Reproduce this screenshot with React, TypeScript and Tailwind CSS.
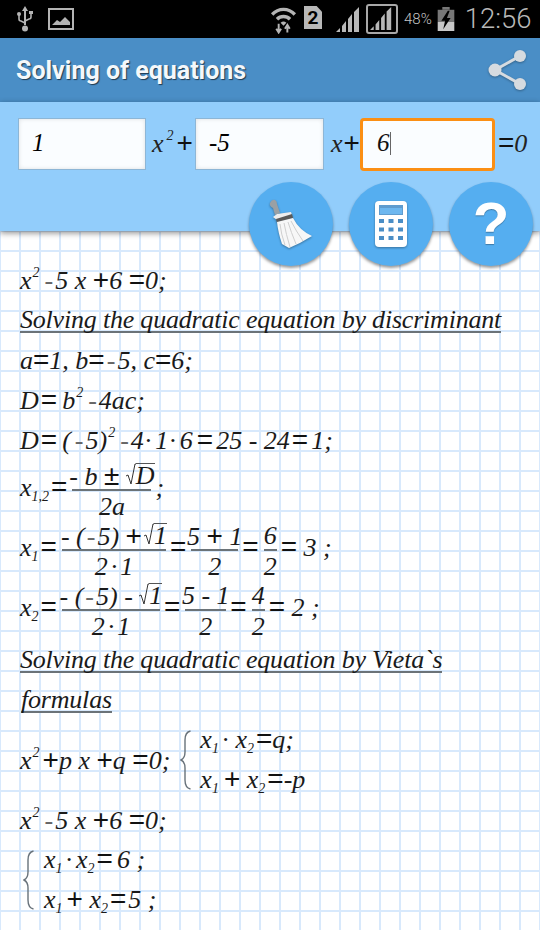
import React from "react";

const Sup = ({ c, cls = "ml-[1px] mr-[3px]" }: { c: string; cls?: string }) => <span className={`text-[14px] align-[12px] leading-none ${cls}`}>{c}</span>;
const Sub = ({ c }: { c: string }) => <span className="text-[14px] align-[-5px] leading-none mr-[2px]">{c}</span>;
const Op = ({ c, cls = "" }: { c: string; cls?: string }) => <span className={`font-['Liberation_Sans',sans-serif] not-italic text-[28px] leading-none text-[#111] ${cls}`}>{c}</span>;
const Mi = () => <span className="text-[#666] mx-[2px]">-</span>;
const Dot = ({ cls = "ml-[1px] mr-[4px]" }: { cls?: string }) => <span className={cls}>·</span>;

const Row = ({ h = "h-10", children }: { h?: string; children: React.ReactNode }) => (
  <div className={`${h} flex items-center whitespace-pre`}><span>{children}</span></div>
);
const FlexRow = ({ h, children }: { h: string; children: React.ReactNode }) => (
  <div className={`${h} flex items-center whitespace-pre`}>{children}</div>
);
const Head = ({ children, cls = "" }: { children: React.ReactNode; cls?: string }) => (
  <div className="h-10 flex items-center whitespace-pre"><span className={`border-b-2 border-[#6b7378] mt-[2px] leading-[22px] tracking-[-0.2px] ${cls}`}>{children}</span></div>
);

const Frac = ({ t, b, w }: { t: React.ReactNode; b: React.ReactNode; w: string }) => (
  <span className={`inline-flex flex-col items-center ${w} ml-[5px] mr-[4px] align-middle`}>
    <span className="h-[27px] leading-[28px] whitespace-pre">{t}</span>
    <span className="h-[2px] w-full bg-[#6b7378]" />
    <span className="h-[27px] leading-[31px] whitespace-pre">{b}</span>
  </span>
);

const Root = ({ c }: { c: string }) => (
  <span className="inline-flex items-end h-[27px]">
    <svg width="10" height="22" viewBox="0 0 10 22" className="mb-[4px] shrink-0"><path d="M0 13 L2 12 L5 21 L9 1 L10 1" fill="none" stroke="#333" strokeWidth="1" /></svg>
    <span className="border-t border-[#555] h-[22px] leading-[24px] mb-[4px]">{c}</span>
  </span>
);

const Brace = () => (
  <svg width="12" height="60" viewBox="0 0 12 60" className="shrink-0 block">
    <path d="M10.5 1 C6 2 5 5 5 10 L5 22 C5 27 3 29 1 30 C3 31 5 33 5 38 L5 50 C5 55 6 58 10.5 59" fill="none" stroke="#68727a" strokeWidth="1.4" />
  </svg>
);

const Circle = ({ children }: { children: React.ReactNode }) => (
  <div className="w-[84px] h-[84px] rounded-full bg-[#55aef0] shadow-[0_2px_3px_rgba(0,0,0,0.4)] flex items-center justify-center">{children}</div>
);

const Field = ({ w, children }: { w: string; children: React.ReactNode }) => (
  <div className={`${w} h-[52px] pl-[13px] pb-[3px] bg-[#fafdff] border border-[#8db6d6] shadow-[inset_0_0_4px_rgba(0,0,0,0.12)] flex items-center shrink-0 text-[25px] text-[#000]`}>{children}</div>
);

const Sig = ({ w = 26, h = 25 }: { w?: number; h?: number }) => (
  <svg width={w} height={h} viewBox="0 0 26 25" className="block">
    <path d="M0 25 L4 25 L4 21 Z M6 25 L6 19 L10 14 L10 25 Z M12 25 L12 12 L16 7 L16 25 Z M18 25 L18 5 L23 0 L23 25 Z" fill="#b8b8b8" />
  </svg>
);

export default function App() {
  return (
    <div className="w-[540px] h-[930px] overflow-hidden flex flex-col font-['Liberation_Serif',serif] bg-white">
      <div className="h-[38px] bg-black shrink-0 flex items-center text-[#b4b4b4]">
        <svg width="18" height="28" viewBox="0 0 18 28" className="ml-[16px]">
          <path d="M9 1 L12 6 L10 6 L10 20 L8 20 L8 6 L6 6 Z" fill="#b4b4b4" />
          <circle cx="9" cy="23.5" r="3" fill="#b4b4b4" />
          <path d="M3 10 V14 Q3 16 5 16 L9 18 M15 8 V12 Q15 14 13 14 L9 16" fill="none" stroke="#b4b4b4" strokeWidth="1.6" />
          <rect x="1" y="7" width="4" height="4" rx="2" fill="#b4b4b4" /><rect x="13" y="6" width="4" height="3" fill="#b4b4b4" />
        </svg>
        <svg width="26" height="22" viewBox="0 0 26 22" className="ml-[14px]">
          <rect x="1" y="1" width="24" height="20" fill="none" stroke="#b4b4b4" strokeWidth="2" />
          <path d="M4 17 L9 12 L12 14 L17 9 L22 14 L22 17 Z" fill="#b4b4b4" />
        </svg>
        <svg width="27" height="30" viewBox="0 0 28 30" className="ml-[196px] mb-[1px]">
          <path d="M1 9 A18 18 0 0 1 27 9 L24.5 11.5 A14 14 0 0 0 3.5 11.5 Z M6 14 A11 11 0 0 1 22 14 L19.5 16.5 A8 8 0 0 0 8.5 16.5 Z M11 19 A4.5 4.5 0 0 1 17 19 L14 22 Z" fill="#b4b4b4" />
          <path d="M9 20 V27 M6.5 25 L9 29 L11.5 25 M18 29 V22 M15.5 25 L18 21 L20.5 25" stroke="#b4b4b4" strokeWidth="2" fill="none" />
        </svg>
        <div className="ml-[7px] w-[18px] h-[23px] mb-[3px] bg-[#b8b8b8] flex items-center justify-center font-['Roboto',sans-serif] font-bold text-[19px] leading-none text-black [clip-path:polygon(0_0,70%_0,100%_25%,100%_100%,0_100%)]">2</div>
        <div className="ml-[14px] flex items-end"><Sig /></div>
        <div className="ml-[4px] w-[32px] h-[30px] border-2 border-[#a8a8a8] rounded-[3px] flex items-end justify-center pb-[2px]"><Sig w={24} h={23} /></div>
        <span className="ml-[6px] font-['Roboto',sans-serif] text-[15px] font-light leading-none text-[#c4c4c4]">48%</span>
        <svg width="18" height="24" viewBox="0 0 18 26" className="ml-[5px]">
          <rect x="5" y="0" width="8" height="3" fill="#777" />
          <rect x="0" y="3" width="18" height="13" fill="#777" />
          <path d="M0 16 H18 V26 H0 Z" fill="#c8c8c8" />
          <path d="M11 4 L4 15 L8 15 L6 24 L14 12 L10 12 L13 4 Z" fill="#000" />
        </svg>
        <span className="ml-[10px] font-['Roboto',sans-serif] font-light text-[27.5px] leading-none text-[#b8b8b8]">12:56</span>
      </div>

      <div className="h-[64px] bg-[#4a8ec6] shrink-0 flex items-center justify-between pl-[16px] pr-[12px]">
        <span className="pt-[2px] font-['Roboto',sans-serif] font-bold text-[25px] text-[#f4f8fb] [text-shadow:1px_1px_1px_rgba(0,0,0,0.6)]">Solving of equations</span>
        <svg width="40" height="40" viewBox="0 0 40 40" className="drop-shadow-[0_1px_1px_rgba(0,0,0,0.3)]">
          <path d="M32 6 L7 20 L32 34" fill="none" stroke="#d6dbe0" strokeWidth="3" />
          <circle cx="32" cy="6" r="6" fill="#d6dbe0" /><circle cx="7" cy="20" r="6.5" fill="#d6dbe0" /><circle cx="32" cy="34" r="6" fill="#d6dbe0" />
        </svg>
      </div>

      <div className="h-[129px] bg-[#92cdfb] shrink-0 shadow-[0_2px_6px_rgba(0,0,0,0.45)] z-10 pt-[16px] flex flex-col italic">
        <div className="flex items-start pl-[18px] text-[#222] text-[26px] h-[53px]">
          <Field w="w-[128px]">1</Field>
          <span className="ml-[6px] w-[43px] whitespace-pre h-[52px] leading-[52px]">x<Sup c="2" cls="ml-[3px] mr-[3px]" /><Op c="+" /></span>
          <Field w="w-[129px]">-5</Field>
          <span className="ml-[7px] w-[29px] whitespace-pre h-[52px] leading-[52px]">x<Op c="+" cls="ml-[1px]" /></span>
          <div className="w-[135px] h-[53px] pb-[3px] bg-[#fafdff] border-[3px] border-[#fb8f14] rounded-[4px] flex items-center pl-[14px] text-[25px] text-[#111] shrink-0">
            6<span className="w-[1px] h-[23px] bg-[#666]" />
          </div>
          <span className="ml-[3px] h-[52px] leading-[52px]"><Op c="=" />0</span>
        </div>
        <div className="mt-[11px] flex justify-end gap-[16px] pr-[7px] not-italic">
          <Circle>
            <svg width="44" height="50" viewBox="0 0 44 50" className="drop-shadow-[0_1px_1px_rgba(0,0,0,0.35)]">
              <path d="M1 4 Q3 0 6 1 Q8 2 8 5 L11 14 L6 16 L4 9 Q0 7 1 4 Z" fill="#9aa0a4" />
              <path d="M4 18 L8 15 L22 13 L23 16 L8 21 Z" fill="#eeeeee" />
              <path d="M7 20 L23 15 L24 19 L8 24 Z" fill="#5a5a5a" />
              <path d="M8 23 L24 19 Q30 31 43 37 Q32 44 20 49 L13 45 Q9 33 8 23 Z" fill="#f7f7f7" />
              <path d="M16 46 Q12 35 11 25 M21 48 Q17 35 15 24 M27 45 Q22 33 19 23 M34 42 Q27 32 22 22" stroke="#cfcfcf" strokeWidth="1" fill="none" />
            </svg>
          </Circle>
          <Circle>
            <svg width="32" height="46" viewBox="0 0 32 46" className="drop-shadow-[0_1px_1px_rgba(0,0,0,0.35)]">
              <rect x="0" y="0" width="32" height="46" rx="4" fill="#fff" />
              <rect x="4" y="4" width="24" height="10" fill="#5f9ccf" />
              <rect x="5" y="7" width="22" height="6" fill="#6db7ef" />
              {[18, 26.5, 35].map((y) => [4, 13.5, 23].map((x) => <rect key={`${x}-${y}`} x={x} y={y} width="5" height="4" fill="#4a8ec6" />))}
            </svg>
          </Circle>
          <Circle>
            <span className="font-['Liberation_Sans',sans-serif] font-bold text-[60px] leading-none text-white [text-shadow:0_1px_1px_rgba(0,0,0,0.3)]">?</span>
          </Circle>
        </div>
      </div>

      <div className="flex-1 pl-[20px] pt-[29px] italic text-[26px] text-[#1a1a1a] leading-none bg-white bg-[linear-gradient(to_right,#d8e9fc_2px,transparent_2px),linear-gradient(to_bottom,#d8e9fc_2px,transparent_2px)] bg-[size:20px_20px] bg-[position:-1px_-1px]">
        <Row>x<Sup c="2" /><Mi />5 x <Op c="+" />6 <Op c="=" />0;</Row>
        <Head>Solving the quadratic equation by discriminant</Head>
        <Row>a<Op c="=" />1, b<Op c="=" /><Mi />5, c<Op c="=" />6;</Row>
        <Row>D<Op c="=" cls="ml-[2px]" /><span className="ml-[5px]">b</span><Sup c="2" /><Mi />4ac;</Row>
        <Row>D<Op c="=" cls="ml-[2px]" /><span className="ml-[5px]">(</span><span className="ml-[2px]"><Mi /></span>5)<Sup c="2" /><Mi />4<Dot />1<Dot />6<Op c="=" cls="ml-[4px]" /><span className="ml-[3px]">25 - 24</span><Op c="=" cls="ml-[2px]" /><span className="ml-[3px]">1;</span></Row>
        <Row h="h-[60px]">x<Sub c="1,2" /><Op c="=" /><Frac w="w-[79px]" t={<>- b <Op c="±" cls="text-[26px]" /> <Root c="D" /></>} b="2a" />;</Row>
        <Row h="h-[60px]">x<Sub c="1" /><Op c="=" /><Frac w="w-[104px]" t={<>- (<Mi />5) <Op c="+" /><span className="ml-[2px]"><Root c="1" /></span></>} b={<>2<Dot cls="mx-[3px]" />1</>} /><Op c="=" /><Frac w="w-[47px]" t={<>5 <Op c="+" cls="text-[26px]" /> 1</>} b="2" /><Op c="=" /><Frac w="w-[13px]" t="6" b="2" /><Op c="=" /> 3 ;</Row>
        <Row h="h-[60px]">x<Sub c="2" /><Op c="=" /><Frac w="w-[98px]" t={<>- (<Mi />5) - <Root c="1" /></>} b={<>2<Dot cls="mx-[3px]" />1</>} /><Op c="=" /><Frac w="w-[41px]" t="5 - 1" b="2" /><Op c="=" /><Frac w="w-[13px]" t="4" b="2" /><Op c="=" /> 2 ;</Row>
        <Head>Solving the quadratic equation by Vieta`s</Head>
        <Head cls="ml-[1px]">formulas</Head>
        <FlexRow h="h-[80px]">
          <span>x<Sup c="2" /><Op c="+" />p x <Op c="+" />q <Op c="=" />0;</span>
          <span className="ml-[10px]"><Brace /></span>
          <div className="ml-[8px] flex flex-col">
            <div className="h-[40px] flex items-center"><span>x<Sub c="1" /><Dot cls="ml-[1px] mr-[7px]" />x<Sub c="2" /><Op c="=" />q;</span></div>
            <div className="h-[40px] flex items-center"><span>x<Sub c="1" /><Op c="+" cls="ml-[3px]" /> x<Sub c="2" /><Op c="=" />-p</span></div>
          </div>
        </FlexRow>
        <Row>x<Sup c="2" /><Mi />5 x <Op c="+" />6 <Op c="=" />0;</Row>
        <FlexRow h="h-[80px]">
          <span className="ml-[3px]"><Brace /></span>
          <div className="ml-[9px] flex flex-col">
            <div className="h-[40px] flex items-center"><span>x<Sub c="1" /><Dot />x<Sub c="2" /><Op c="=" /><span className="ml-[4px]">6 ;</span></span></div>
            <div className="h-[40px] flex items-center"><span>x<Sub c="1" /><Op c="+" cls="ml-[2px]" /> x<Sub c="2" /><Op c="=" /><span className="ml-[2px]">5 ;</span></span></div>
          </div>
        </FlexRow>
      </div>
    </div>
  );
}
